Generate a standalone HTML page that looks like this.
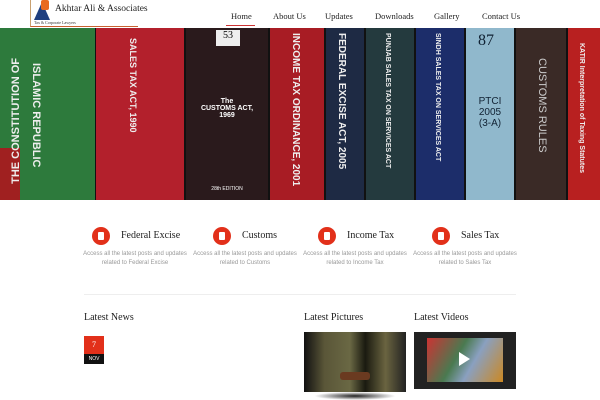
<!DOCTYPE html>
<html><head><meta charset="utf-8"><style>
body{margin:0;width:600px;height:400px;overflow:hidden;background:#fff;font-family:"Liberation Serif",serif;position:relative}
.hdr{position:absolute;top:0;left:0;width:600px;height:28px;background:#fff}
.logo{position:absolute;left:30px;top:0;width:107px;height:26px;border-left:1px solid #c8a070;border-bottom:1px solid #c86030}
nav{position:absolute;top:11px;left:222px;font-size:8.5px;color:#222}
nav span{position:absolute;white-space:nowrap}
.hero{position:absolute;top:28px;left:0;width:600px;height:172px;background:#111;overflow:hidden}
.b{position:absolute;top:0;height:172px}
.v{position:absolute;color:#eee;font-family:"Liberation Sans",sans-serif;font-weight:bold;writing-mode:vertical-rl;white-space:nowrap}
.f{position:absolute;top:228px;font-size:10px;color:#222}
.ic{position:absolute;width:18px;height:18px;border-radius:50%;background:#e2301a}
.ic:after{content:"";position:absolute;left:6px;top:5px;width:6px;height:8px;background:#fff;border-radius:1px}
.d{position:absolute;top:250px;width:110px;text-align:center;font-family:"Liberation Sans",sans-serif;font-size:6px;line-height:9px;color:#999}
h3{position:absolute;margin:0;font-weight:normal;font-size:10px;color:#222;top:312px}
</style></head><body>
<div class="hdr">
<div class="logo">
<div style="position:absolute;left:3px;top:2px;width:0;height:0;border-left:8px solid transparent;border-right:8px solid transparent;border-bottom:18px solid #1f3f80"></div>
<div style="position:absolute;left:10px;top:0;width:8px;height:10px;background:#e86a20;border-radius:2px"></div>
<div style="position:absolute;left:24px;top:4px;font-size:9.5px;color:#222;white-space:nowrap">Akhtar Ali &amp; Associates</div>
<div style="position:absolute;left:3px;top:20px;font-size:4px;color:#333;white-space:nowrap">Tax &amp; Corporate Lawyers</div>
</div>
<nav><span style="left:9px">Home</span><span style="left:51px">About Us</span><span style="left:103px">Updates</span><span style="left:153px">Downloads</span><span style="left:212px">Gallery</span><span style="left:260px">Contact Us</span></nav>
<div style="position:absolute;left:226px;top:25px;width:29px;height:1px;background:#c33"></div>
</div>
<div class="hero">
<div class="b" style="left:0;width:95px;background:#2d7a3c"></div>
<div class="b" style="left:0;top:120px;width:20px;height:52px;background:#a02020"></div>
<div class="v" style="left:10px;top:30px;font-size:11px;transform:rotate(180deg);writing-mode:vertical-lr">THE CONSTITUTION OF</div>
<div class="v" style="left:30px;top:35px;font-size:11px">ISLAMIC REPUBLIC</div>
<div class="b" style="left:96px;width:88px;background:#b3202c"></div>
<div class="v" style="left:128px;top:10px;font-size:9px">SALES TAX ACT, 1990</div>
<div class="b" style="left:186px;width:82px;background:#2a1a1c"></div>
<div style="position:absolute;left:216px;top:2px;width:24px;height:16px;background:#eee;font-size:10px;text-align:center">53</div>
<div style="position:absolute;left:190px;top:70px;width:74px;text-align:center;color:#fff;font-family:'Liberation Sans',sans-serif;font-size:7px;font-weight:bold">The<br>CUSTOMS ACT,<br>1969</div>
<div style="position:absolute;left:190px;top:158px;width:74px;text-align:center;color:#fff;font-family:'Liberation Sans',sans-serif;font-size:5px">28th EDITION</div>
<div class="b" style="left:270px;width:54px;background:#a81c24"></div>
<div class="v" style="left:290px;top:5px;font-size:10px">INCOME TAX ORDINANCE, 2001</div>
<div class="b" style="left:326px;width:38px;background:#1e2a44"></div>
<div class="v" style="left:336px;top:5px;font-size:10px">FEDERAL EXCISE ACT, 2005</div>
<div class="b" style="left:366px;width:48px;background:#243a3e"></div>
<div class="v" style="left:384px;top:5px;font-size:7px">PUNJAB SALES TAX ON SERVICES ACT</div>
<div class="b" style="left:416px;width:48px;background:#1c2d6a"></div>
<div class="v" style="left:434px;top:5px;font-size:7px">SINDH SALES TAX ON SERVICES ACT</div>
<div class="b" style="left:466px;width:48px;background:#90b8cc"></div>
<div style="position:absolute;left:470px;top:68px;width:40px;text-align:center;font-family:'Liberation Sans',sans-serif;font-size:10px;color:#123">PTCI<br>2005<br>(3-A)</div>
<div style="position:absolute;left:478px;top:4px;font-size:16px;color:#123">87</div>
<div class="b" style="left:516px;width:50px;background:#3a2a26"></div>
<div class="v" style="left:536px;top:30px;font-size:11px;font-weight:normal;color:#ccc">CUSTOMS RULES</div>
<div class="b" style="left:568px;width:32px;background:#b82020"></div>
<div class="v" style="left:578px;top:15px;font-size:7px">KATIR Interpretation of Taxing Statutes</div>
</div>
<div class="ic" style="left:92px;top:227px"></div><div class="f" style="left:121px;top:230px">Federal Excise</div>
<div class="ic" style="left:213px;top:227px"></div><div class="f" style="left:242px;top:230px">Customs</div>
<div class="ic" style="left:318px;top:227px"></div><div class="f" style="left:347px;top:230px">Income Tax</div>
<div class="ic" style="left:432px;top:227px"></div><div class="f" style="left:461px;top:230px">Sales Tax</div>
<div class="d" style="left:80px">Access all the latest posts and updates related to Federal Excise</div>
<div class="d" style="left:190px">Access all the latest posts and updates related to Customs</div>
<div class="d" style="left:300px">Access all the latest posts and updates related to Income Tax</div>
<div class="d" style="left:410px">Access all the latest posts and updates related to Sales Tax</div>
<div style="position:absolute;left:84px;top:294px;width:432px;height:1px;background:#eee"></div>
<h3 style="left:84px">Latest News</h3>
<h3 style="left:304px">Latest Pictures</h3>
<h3 style="left:414px">Latest Videos</h3>
<div style="position:absolute;left:84px;top:336px;width:20px;height:18px;background:#e2301a;color:#fff;font-size:8px;text-align:center;line-height:18px">7</div>
<div style="position:absolute;left:84px;top:354px;width:20px;height:10px;background:#111;color:#fff;font-family:'Liberation Sans',sans-serif;font-size:5px;text-align:center;line-height:10px">NOV</div>
<div style="position:absolute;left:304px;top:332px;width:102px;height:60px;background:linear-gradient(90deg,#111 0%,#5a5638 20%,#6a6844 45%,#1a1a10 60%,#6a6440 80%,#222 100%)"></div>
<div style="position:absolute;left:340px;top:372px;width:30px;height:8px;background:#6a3a20;border-radius:3px"></div>
<div style="position:absolute;left:314px;top:392px;width:82px;height:8px;background:radial-gradient(#222,#fff 70%)"></div>
<div style="position:absolute;left:414px;top:332px;width:102px;height:57px;background:#222"></div>
<div style="position:absolute;left:427px;top:338px;width:76px;height:44px;background:linear-gradient(120deg,#c33 0%,#4a7a50 40%,#8aa0c0 60%,#c82 100%)"></div>
<div style="position:absolute;left:459px;top:352px;width:0;height:0;border-top:7px solid transparent;border-bottom:7px solid transparent;border-left:11px solid #fff"></div>
</body></html>
